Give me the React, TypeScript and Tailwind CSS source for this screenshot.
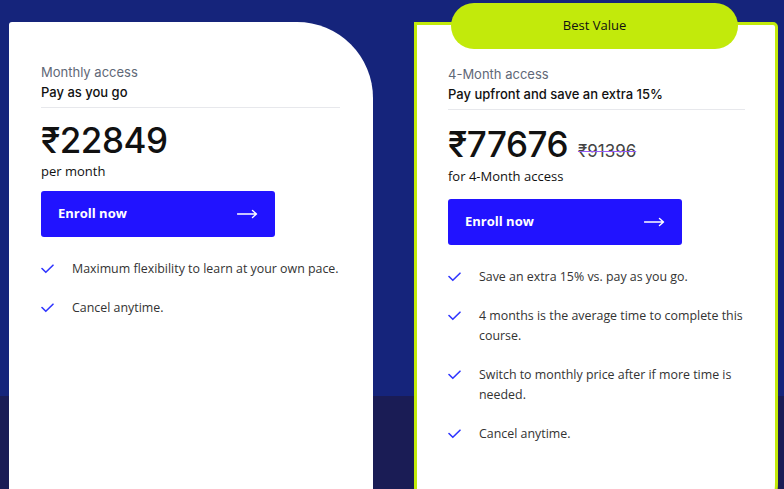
const sans = "font-['Inter','Liberation_Sans',sans-serif]";
const body = "font-['Open_Sans','Liberation_Sans',sans-serif]";

const CheckIcon = () => (
  <svg width="13" height="10" viewBox="0 0 13 10" fill="none" className="shrink-0">
    <path d="M1 4.5 L4.8 8.3 L12 1.2" stroke="#2f35ff" strokeWidth="1.6" strokeLinecap="round" strokeLinejoin="round" />
  </svg>
);

const ArrowIcon = () => (
  <svg width="21" height="10" viewBox="0 0 21 10" fill="none">
    <path d="M0.5 5 H19.5 M15.5 1.5 L19.5 5 L15.5 8.5" stroke="white" strokeWidth="1.4" strokeLinecap="round" strokeLinejoin="round" />
  </svg>
);

const EnrollButton = () => (
  <button className={`flex h-[46px] w-[234px] items-center justify-between rounded-[3px] bg-[#2113ff] pl-[17px] pr-[17px] text-[13px] font-bold text-white ${body}`}>
    <span>Enroll now</span>
    <ArrowIcon />
  </button>
);

const Features = ({ items }: { items: string[] }) => (
  <ul className={`mt-[22px] flex flex-col gap-[19px] text-[12.4px] leading-[20px] text-[#333] ${body}`}>
    {items.map((item) => (
      <li key={item} className="flex items-start">
        <span className="flex h-[20px] w-[31px] shrink-0 items-center">
          <CheckIcon />
        </span>
        <span>{item}</span>
      </li>
    ))}
  </ul>
);

const CardHeader = ({ label, tagline }: { label: string; tagline: string }) => (
  <div className={sans}>
    <p className="text-[13px] leading-[18px] text-[#5f6877]">{label}</p>
    <p className="mt-[2px] text-[13px] font-medium leading-[18px] text-[#111]">{tagline}</p>
    <div className="mt-[6px] h-px bg-[#e7e8ec]" />
  </div>
);

export default function App() {
  return (
    <div className="h-[489px] w-[784px] overflow-hidden bg-[linear-gradient(to_bottom,#15247b_396px,#1a1c55_396px)]">
      <div className="flex gap-[41px] pl-[9px] pt-[22px]">
        <div className="h-[520px] w-[364px] rounded-tl-[3px] rounded-tr-[76px] bg-white pl-[32px] pr-[33px] pt-[41px]">
          <CardHeader label="Monthly access" tagline="Pay as you go" />
          <p className={`mt-[13px] text-[35px] font-medium leading-[38px] tracking-[-0.5px] text-[#111] ${sans}`}>₹22849</p>
          <p className={`mt-[5px] text-[13px] font-medium leading-[14px] text-[#111] ${body}`}>per month</p>
          <div className="mt-[13px]">
            <EnrollButton />
          </div>
          <Features items={["Maximum flexibility to learn at your own pace.", "Cancel anytime."]} />
        </div>

        <div className="relative h-[530px] w-[364px] rounded-tr-[5px] rounded-br-[70px] border-[3px] border-[#c2ea0b] bg-white pl-[31px] pr-[30px] pt-[40px]">
          <div className={`absolute left-[34px] top-[-22px] flex h-[46px] w-[287px] items-center justify-center rounded-full bg-[#c2ea0b] text-[13px] font-medium text-[#111] ${body}`}>
            Best Value
          </div>
          <CardHeader label="4-Month access" tagline="Pay upfront and save an extra 15%" />
          <div className="mt-[15px] flex items-baseline gap-[10px]">
            <span className={`text-[35px] font-medium leading-[38px] tracking-[-0.5px] text-[#111] ${sans}`}>₹77676</span>
            <span className={`text-[17px] leading-[20px] text-[#444] line-through decoration-[#9b5cf6] ${sans}`}>₹91396</span>
          </div>
          <p className={`mt-[4px] text-[13px] font-medium leading-[18px] text-[#111] ${body}`}>for 4-Month access</p>
          <div className="mt-[14px]">
            <EnrollButton />
          </div>
          <Features
            items={[
              "Save an extra 15% vs. pay as you go.",
              "4 months is the average time to complete this course.",
              "Switch to monthly price after if more time is needed.",
              "Cancel anytime.",
            ]}
          />
        </div>
      </div>
    </div>
  );
}
